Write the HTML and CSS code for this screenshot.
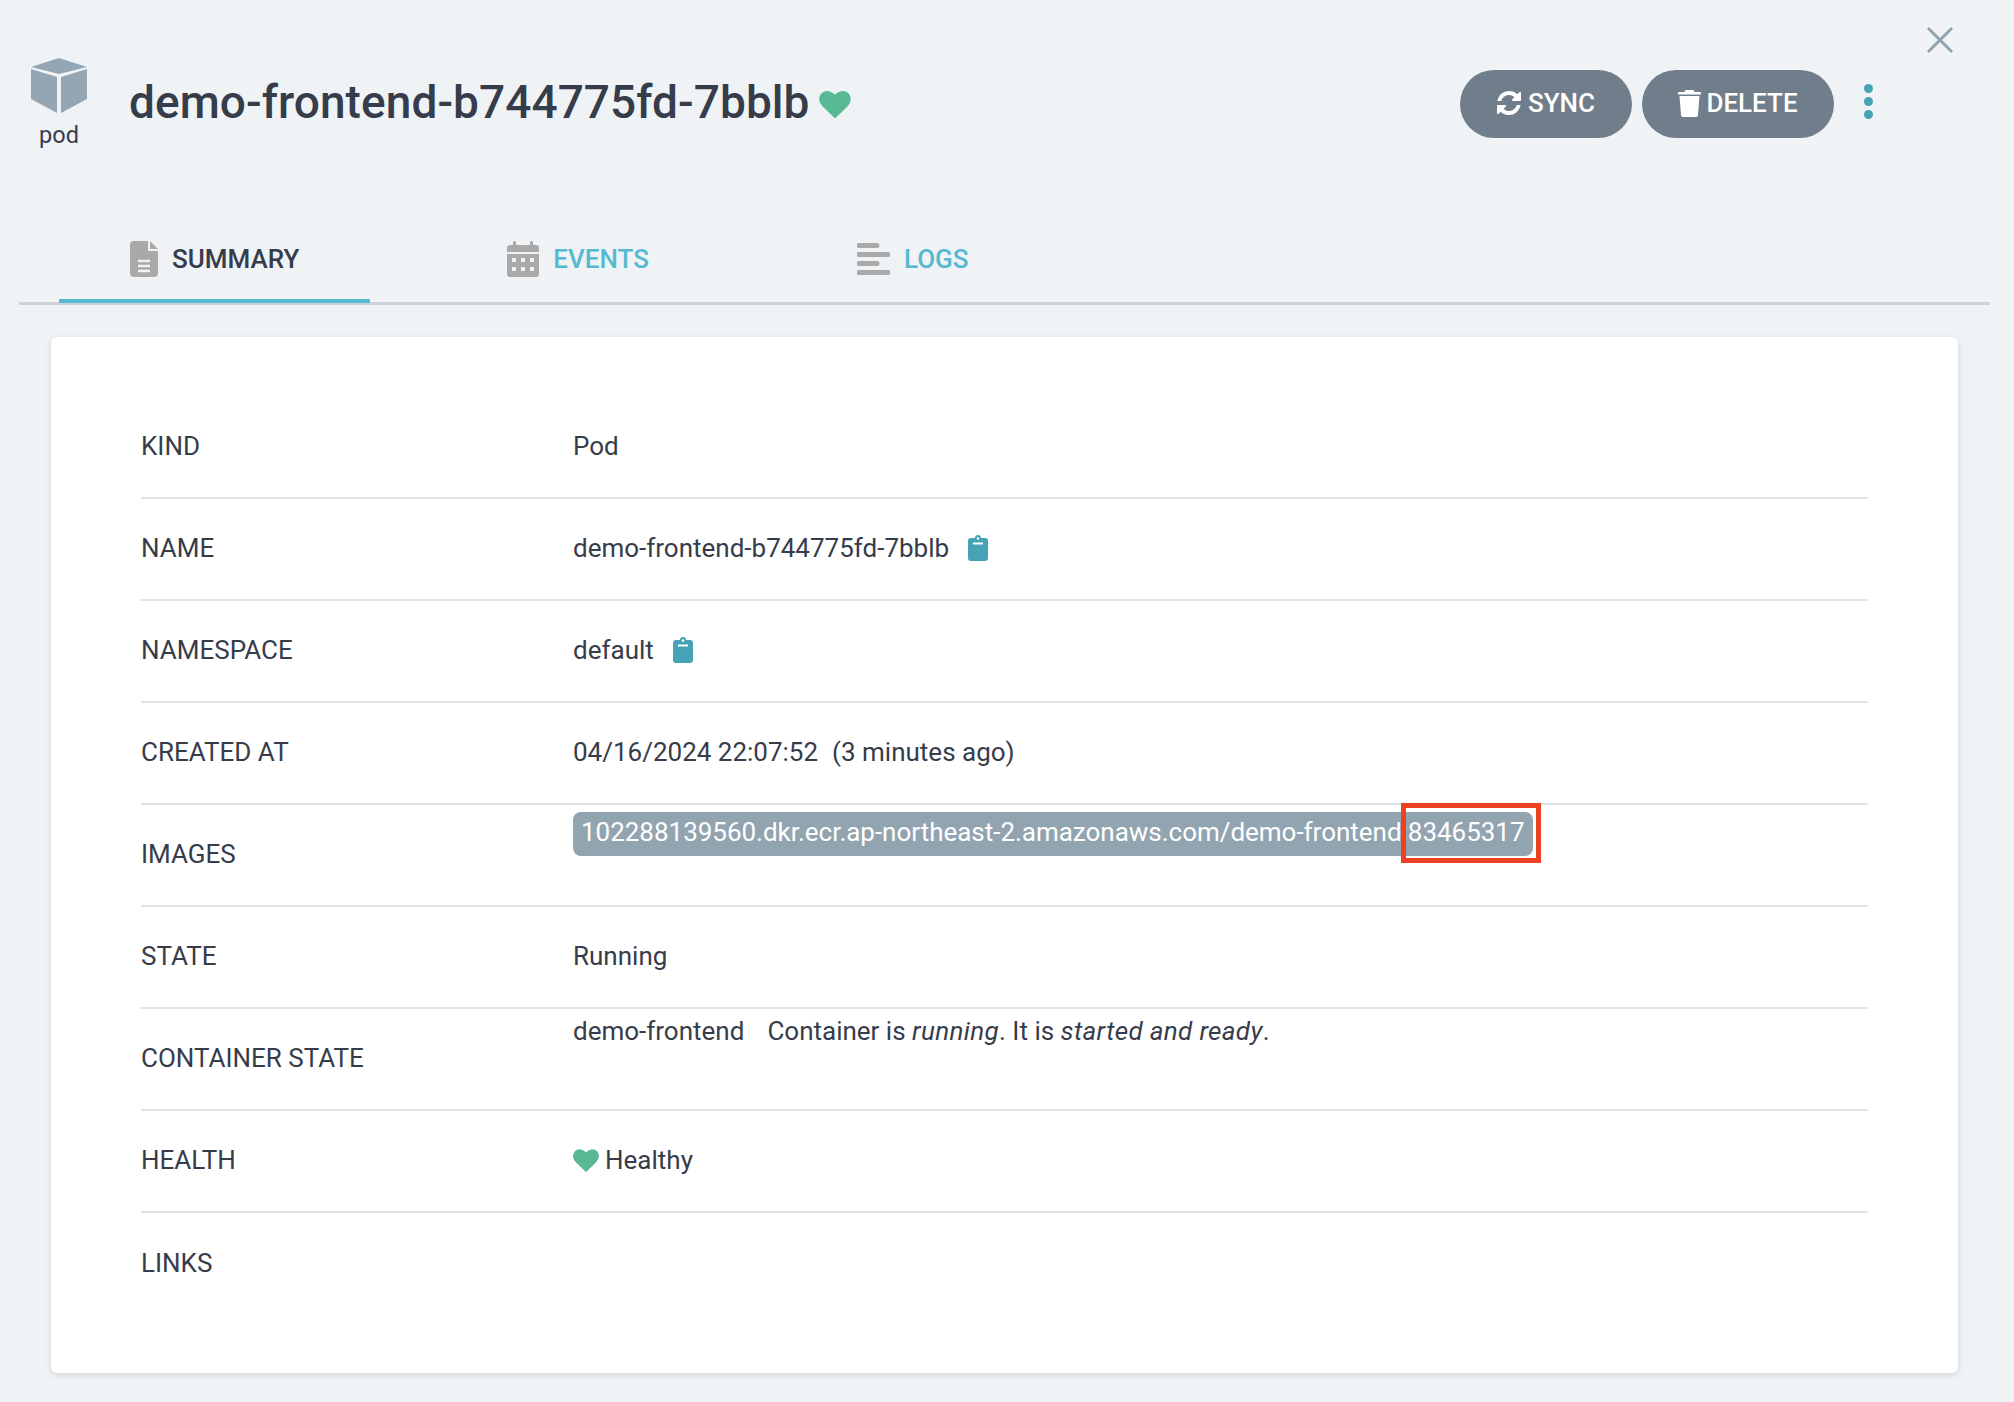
FILE: index.html
```html
<!DOCTYPE html>
<html lang="en">
<head>
<meta charset="utf-8">
<title>demo-frontend-b744775fd-7bblb</title>
<link rel="stylesheet" href="styles.css">
</head>
<body>
<div class="page">
  <button class="close" aria-label="Close">
    <svg viewBox="0 0 26 26" width="26" height="26"><path d="M1 1 25 25M25 1 1 25" class="close-x"/></svg>
  </button>
  <header class="head">
    <div class="kind">
      <svg class="kind-icon" viewBox="0 0 56 56" width="56" height="56">
        <path class="pod" d="M0 9 28 0 56 9 28 16Z"/>
        <path class="pod" d="M0 11 26 19V55L0 41Z"/>
        <path class="pod" d="M30 19 56 11V41L30 55Z"/>
      </svg>
      <span class="kind-label">pod</span>
    </div>
    <h1 class="title">demo-frontend-b744775fd-7bblb</h1>
    <svg class="title-heart" viewBox="0 128 1792 1536"><path class="heart" d="M896 1664q-26 0-44-18l-624-602q-10-8-27.5-26t-55.5-65.5-68-97.5-53.5-121-23.5-138q0-220 127-344t351-124q62 0 126.5 21.5t120 58 95.5 68.5 76 68q36-36 76-68t95.5-68.5 120-58 126.5-21.5q224 0 351 124t127 344q0 221-229 450l-623 600q-18 18-44 18z"/></svg>
    <div class="actions">
      <button class="btn btn-sync">
        <svg class="btn-icon" viewBox="128 128 1536 1536"><path fill="currentColor" d="M1639 1056q0 5-1 7-64 268-268 434.5t-478 166.5q-146 0-282.5-55t-243.5-157l-129 129q-19 19-45 19t-45-19-19-45v-448q0-26 19-45t45-19h448q26 0 45 19t19 45-19 45l-137 137q71 66 161 102t187 36q134 0 250-65t186-179q11-17 53-117 8-23 30-23h192q13 0 22.5 9.5t9.5 22.5zm25-800v448q0 26-19 45t-45 19h-448q-26 0-45-19t-19-45 19-45l138-138q-148-137-349-137-134 0-250 65t-186 179q-11 17-53 117-8 23-30 23h-199q-13 0-22.5-9.5t-9.5-22.5v-7q65-268 270-434.5t480-166.5q146 0 284 55.5t245 156.5l130-129q19-19 45-19t45 19 19 45z"/></svg>
        SYNC
      </button>
      <button class="btn btn-delete">
        <svg class="btn-icon trash" viewBox="0 0 23 27"><path fill="currentColor" d="M8 0H15Q16 0 16.500 2H22Q23 2 23 3V4.500H0V3Q0 2 1 2H6.500Q7 0 8 0ZM1.500 6H21.500L20 25Q19.900 27 18 27H5Q3.100 27 3 25Z"/></svg>
        DELETE
      </button>
      <div class="dots"><i></i><i></i><i></i></div>
    </div>
  </header>

  <nav class="tabs">
    <a class="tab tab-active">
      <svg class="tab-icon" viewBox="0 0 28 36" width="28" height="36"><path class="gray" d="M4 0H18V10H28V32Q28 36 24 36H4Q0 36 0 32V4Q0 0 4 0ZM20 0 28 8H20Z"/><path class="lines-white" d="M8 20H20M8 25H20M8 30H20"/></svg>
      SUMMARY
    </a>
    <a class="tab">
      <svg class="tab-icon" viewBox="0 0 32 36" width="32" height="36"><path class="gray" d="M6 1.500Q6 0 7.500 0T9 1.500V4H23V1.500Q23 0 24.500 0T26 1.500V4H29Q32 4 32 7V11H0V7Q0 4 3 4H6ZM0 13H32V33Q32 36 29 36H3Q0 36 0 33Z"/><path class="cal" d="M5 17h4v4H5zM14 17h4v4h-4zM23 17h4v4h-4zM5 26h4v4H5zM14 26h4v4h-4zM23 26h4v4h-4z"/></svg>
      EVENTS
    </a>
    <a class="tab">
      <svg class="tab-icon" viewBox="0 0 33 32" width="33" height="32"><path class="log-lines" d="M2 2.500H20M2 11.500H31M2 20.500H20M2 29.500H31"/></svg>
      LOGS
    </a>
  </nav>

  <main class="card">
    <div class="row"><div class="label">KIND</div><div class="value">Pod</div></div>
    <div class="row"><div class="label">NAME</div><div class="value">demo-frontend-b744775fd-7bblb
      <svg class="clip" viewBox="0 0 20 26"><path class="clip-body" d="M7 3Q7 0 10 0T13 3H17Q20 3 20 6V23Q20 26 17 26H3Q0 26 0 23V6Q0 3 3 3Z"/><circle class="clip-hole" cx="10" cy="3.500" r="1.300"/><path class="clip-dash" d="M5 8.500H15"/></svg></div></div>
    <div class="row"><div class="label">NAMESPACE</div><div class="value">default
      <svg class="clip" viewBox="0 0 20 26"><path class="clip-body" d="M7 3Q7 0 10 0T13 3H17Q20 3 20 6V23Q20 26 17 26H3Q0 26 0 23V6Q0 3 3 3Z"/><circle class="clip-hole" cx="10" cy="3.500" r="1.300"/><path class="clip-dash" d="M5 8.500H15"/></svg></div></div>
    <div class="row"><div class="label">CREATED AT</div><div class="value">04/16/2024 22:07:52 <span class="ago">(3 minutes ago)</span></div></div>
    <div class="row"><div class="label">IMAGES</div><div class="value value-top value-images"><span class="tag">102288139560.dkr.ecr.ap-northeast-2.amazonaws.com/demo-frontend:83465317<span class="mark"></span></span></div></div>
    <div class="row"><div class="label">STATE</div><div class="value">Running</div></div>
    <div class="row"><div class="label">CONTAINER STATE</div><div class="value value-top value-container"><span class="cname">demo-frontend</span>Container is <em>running</em>. It is <em>started and ready</em>.</div></div>
    <div class="row"><div class="label">HEALTH</div><div class="value"><svg class="row-heart" viewBox="0 128 1792 1536"><path class="heart" d="M896 1664q-26 0-44-18l-624-602q-10-8-27.5-26t-55.5-65.5-68-97.5-53.5-121-23.5-138q0-220 127-344t351-124q62 0 126.5 21.5t120 58 95.5 68.5 76 68q36-36 76-68t95.5-68.5 120-58 126.5-21.5q224 0 351 124t127 344q0 221-229 450l-623 600q-18 18-44 18z"/></svg>Healthy</div></div>
    <div class="row"><div class="label">LINKS</div><div class="value"></div></div>
  </main>
</div>
</body>
</html>
```
FILE: styles.css
```css
* { box-sizing: border-box; }
html, body { margin: 0; padding: 0; }
body {
  background: #eff3f6;
  color: #363c4a;
  font-family: Roboto, "Liberation Sans", sans-serif;
  font-size: 26px;
}
.page { position: relative; width: 2014px; height: 1402px; overflow: hidden; }

.close {
  position: absolute;
  top: 27px;
  right: 61px;
  width: 26px;
  height: 26px;
  padding: 0;
  border: 0;
  background: none;
  line-height: 0;
}
.close-x { stroke: #8fa4b1; stroke-width: 3; fill: none; }

.head {
  display: flex;
  align-items: flex-start;
  height: 229px;
  padding: 58px 0 0 31px;
}
.kind { display: flex; flex-direction: column; align-items: center; width: 56px; }
.kind-icon { display: block; }
.pod { fill: #94a5b3; }
.kind-label { font-size: 23.500px; line-height: 27px; margin-top: 8px; color: #363c4a; }
.title {
  margin: 14px 0 0 42px;
  font-size: 46px;
  line-height: 60px;
  font-weight: 500;
  letter-spacing: .07px;
  color: #363c4a;
}
.title-heart { width: 32px; height: 27px; margin: 33px 0 0 9px; }
.heart { fill: #5ab995; }

.actions { display: flex; align-items: center; margin: 12px 0 0 auto; padding-right: 141px; }
.btn {
  display: flex;
  align-items: center;
  justify-content: center;
  height: 68px;
  padding: 0 0 2px;
  border: 0;
  border-radius: 34px;
  background: #707d8a;
  color: #fff;
  font-family: inherit;
  font-size: 26px;
  font-weight: 500;
  gap: 5px;
}
.btn-sync { width: 172px; gap: 7px; }
.btn-delete { width: 192px; margin-left: 10px; }
.btn-icon { width: 24px; height: 24px; }
.trash { height: 27px; width: 23px; }
.dots { display: flex; flex-direction: column; gap: 4px; margin: 0 0 6px 30px; }
.dots i { display: block; width: 9px; height: 9px; border-radius: 50%; background: #46a3b5; }

.tabs {
  display: flex;
  gap: 66px;
  height: 76px;
  margin: 0 24px 0 19px;
  padding-left: 40px;
  border-bottom: 3px solid #ccd3d9;
}
.tab {
  display: flex;
  align-items: center;
  gap: 14px;
  height: 74px;
  padding: 0 71px 14px;
  font-size: 26px;
  font-weight: 500;
  color: #55b9d0;
}
.tab-active { color: #363c4a; border-bottom: 4px solid #55b9d0; padding-bottom: 10px; }
.tab-icon { display: block; flex: none; }
.gray { fill: #a9a9a9; }
.lines-white { stroke: #eff3f6; stroke-width: 2.500; fill: none; }
.cal { fill: #eff3f6; }
.log-lines { stroke: #a9a9a9; stroke-width: 5; stroke-linecap: round; fill: none; }

.card {
  width: 1907px;
  height: 1036px;
  margin: 32px 0 0 51px;
  padding: 60px 90px 58px;
  background: #fff;
  border-radius: 6px;
  box-shadow: 0 2px 6px rgba(0, 0, 0, .12);
}
.row {
  display: flex;
  align-items: center;
  height: 102px;
  padding-bottom: 2px;
  border-bottom: 2px solid #dfe4e8;
}
.row:last-child { border-bottom: 0; }
.label { width: 432px; flex: none; }
.value { display: flex; align-items: center; flex: 1; }
.value-top { align-self: flex-start; }
.value-images { padding-top: 7px; }
.value-container { padding-top: 5px; display: block; line-height: 34px; }
.value-container em { letter-spacing: .35px; }
.clip { width: 20px; height: 26px; margin: 0 0 1px 19px; }
.clip-body { fill: #46a3b5; }
.clip-hole { fill: #fff; }
.clip-dash { stroke: #fff; stroke-width: 2; }
.ago { margin-left: 14px; }
.tag {
  position: relative;
  display: block;
  height: 44px;
  line-height: 40px;
  padding: 0 8px;
  border-radius: 8px;
  background: #93a4b1;
  color: #fff;
  letter-spacing: -.02px;
  white-space: nowrap;
}
.mark {
  position: absolute;
  right: -8px;
  top: -9px;
  width: 140px;
  height: 60px;
  border: 5px solid #ee4124;
}
.cname { margin-right: 23px; }
.row-heart { width: 26px; height: 23px; margin-right: 6px; }
```
